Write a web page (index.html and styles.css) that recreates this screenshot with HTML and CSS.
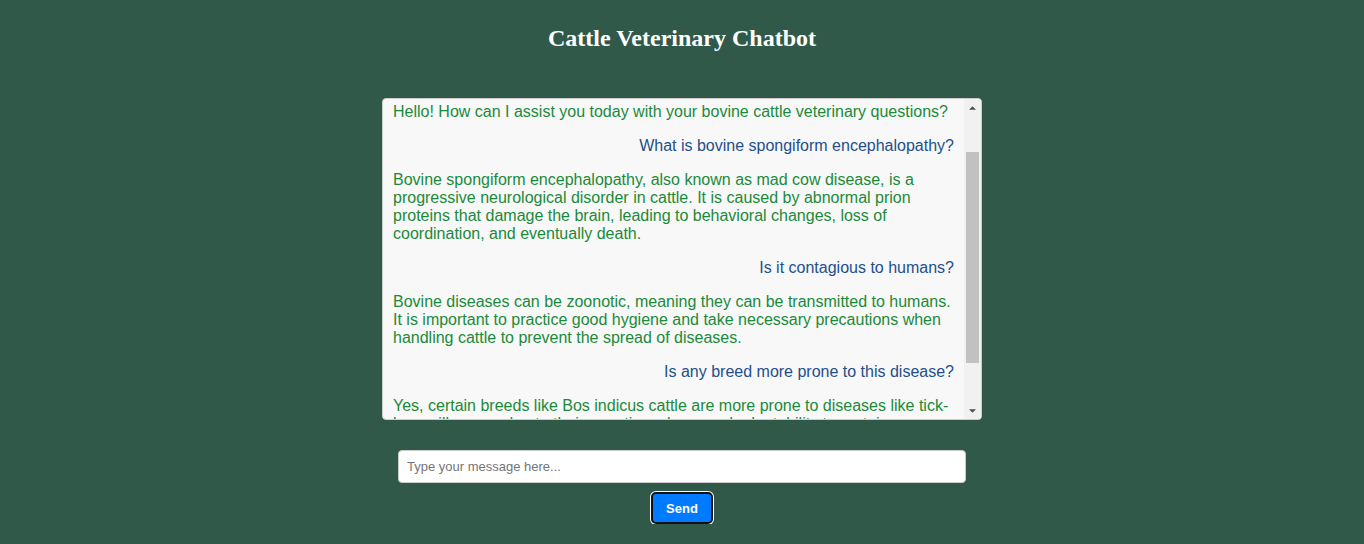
FILE: index.html
```html
<!DOCTYPE html>
<html lang="en">
<head>
<meta charset="utf-8">
<title>Cattle Veterinary Chatbot</title>
<link rel="stylesheet" href="styles.css">
</head>
<body>
<div class="page">
  <h1 class="title">Cattle Veterinary Chatbot</h1>
  <div class="chat">
    <div class="messages" id="messages">
      <p class="msg bot">Hello! How can I assist you today with your bovine cattle veterinary questions?</p>
      <p class="msg user">What is bovine spongiform encephalopathy?</p>
      <p class="msg bot">Bovine spongiform encephalopathy, also known as mad cow disease, is a progressive neurological disorder in cattle. It is caused by abnormal prion proteins that damage the brain, leading to behavioral changes, loss of coordination, and eventually death.</p>
      <p class="msg user">Is it contagious to humans?</p>
      <p class="msg bot">Bovine diseases can be zoonotic, meaning they can be transmitted to humans. It is important to practice good hygiene and take necessary precautions when handling cattle to prevent the spread of diseases.</p>
      <p class="msg user">Is any breed more prone to this disease?</p>
      <p class="msg bot">Yes, certain breeds like Bos indicus cattle are more prone to diseases like tick-borne illnesses due to their genetic makeup and adaptability to certain environments. Proper care helps reduce the risk.</p>
    </div>
    <div class="scrollbar" aria-hidden="true">
      <div class="sb-btn">
        <svg width="7" height="4" viewBox="0 0 8 4"><path d="M0 4L4 0L8 4Z" fill="#505050"/></svg>
      </div>
      <div class="sb-track">
        <div class="sb-thumb"></div>
      </div>
      <div class="sb-btn">
        <svg width="7" height="4" viewBox="0 0 8 4"><path d="M0 0L8 0L4 4Z" fill="#505050"/></svg>
      </div>
    </div>
  </div>
  <input class="input" type="text" placeholder="Type your message here...">
  <button class="send" type="button">Send</button>
</div>
<script src="script.js"></script>
</body>
</html>
```
FILE: styles.css
```css
html, body {
  margin: 0;
  padding: 0;
  background: #31594a;
}
.page {
  display: flex;
  flex-direction: column;
  align-items: center;
  padding-top: 25px;
}
.title {
  margin: 0;
  font-family: "Liberation Serif", "Times New Roman", serif;
  font-size: 24px;
  font-weight: bold;
  color: #ffffff;
  line-height: 27px;
}
.chat {
  box-sizing: border-box;
  width: 600px;
  height: 322px;
  margin-top: 46px;
  display: flex;
  background: #f8f8f8;
  border: 1px solid #cccccc;
  border-radius: 4px;
  overflow: hidden;
  font-family: "Liberation Sans", Arial, sans-serif;
  font-size: 16px;
}
.messages {
  flex: 1;
  min-width: 0;
  padding: 43px 10px 10px 10px;
  overflow: hidden;
}
.scrollbar {
  width: 17px;
  flex: none;
  display: flex;
  flex-direction: column;
  background: #f1f1f1;
}
.sb-btn {
  height: 17px;
  flex: none;
  display: flex;
  align-items: center;
  justify-content: center;
}
.sb-btn svg {
  display: block;
}
.sb-track {
  flex: 1;
  padding: 36px 2px 0 2px;
}
.sb-thumb {
  height: 211px;
  background: #c1c1c1;
}
.msg {
  margin: 16px 0;
}
.bot {
  color: #1b8a3a;
  text-align: left;
}
.user {
  color: #234f8c;
  text-align: right;
}
.input {
  box-sizing: border-box;
  width: 568px;
  height: 33px;
  margin-top: 30px;
  padding: 0 8px;
  border: 1px solid #cccccc;
  border-radius: 4px;
  background: #ffffff;
  font-family: "Liberation Sans", Arial, sans-serif;
  font-size: 13px;
  color: #222;
  outline: none;
}
.input::placeholder {
  color: #757575;
}
.send {
  box-sizing: border-box;
  width: 62px;
  height: 32px;
  margin-top: 9px;
  padding: 0;
  background: #007bff;
  color: #ffffff;
  border: 2px solid #111111;
  border-radius: 5px;
  box-shadow: 0 0 0 1px #ffffff;
  font-family: "Liberation Sans", Arial, sans-serif;
  font-size: 13px;
  font-weight: bold;
  cursor: pointer;
}
```
FILE: script.js
```js
document.getElementById('messages').scrollTop = 55;
```
